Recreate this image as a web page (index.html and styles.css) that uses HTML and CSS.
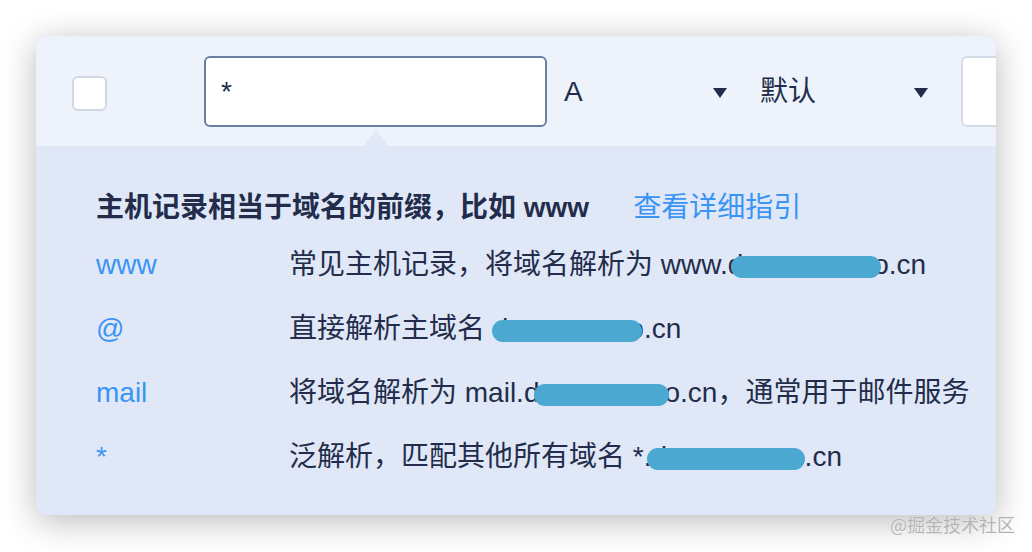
FILE: index.html
```html
<!DOCTYPE html>
<html lang="zh-CN">
<head>
<meta charset="utf-8">
<title>主机记录</title>
<link rel="stylesheet" href="styles.css">
</head>
<body>
<div class="page">
  <div class="card">
    <div class="toprow">
      <div class="checkbox"></div>
      <div class="field">
        <div class="input active">*</div>
        <div class="pointer"></div>
      </div>
      <div class="select sel-type">
        <span>A</span>
        <svg class="caret" width="14" height="10" viewBox="0 0 14 10"><polygon points="0,0 14,0 7,10" fill="#232d4b"/></svg>
      </div>
      <div class="select sel-line">
        <span>默认</span>
        <svg class="caret" width="14" height="10" viewBox="0 0 14 10"><polygon points="0,0 14,0 7,10" fill="#232d4b"/></svg>
      </div>
      <div class="input plain"></div>
    </div>
    <div class="panel">
      <div class="title"><b>主机记录相当于域名的前缀，比如 www</b><a class="link">查看详细指引</a></div>
      <div class="row"><span class="key">www</span><span class="desc">常见主机记录，将域名解析为 www.d<span class="blob b1"></span>o.cn</span></div>
      <div class="row"><span class="key">@</span><span class="desc">直接解析主域名 d<span class="blob b2"></span>o.cn</span></div>
      <div class="row"><span class="key">mail</span><span class="desc">将域名解析为 mail.d<span class="blob b3"></span>o.cn，通常用于邮件服务</span></div>
      <div class="row"><span class="key">*</span><span class="desc">泛解析，匹配其他所有域名 *.d<span class="blob b4"></span>o.cn</span></div>
    </div>
  </div>
  <div class="watermark">@掘金技术社区</div>
</div>
</body>
</html>
```

FILE: styles.css
```css
html, body {
  margin: 0;
  padding: 0;
  background: #ffffff;
}
body {
  font-family: "Liberation Sans", "Noto Sans CJK SC", sans-serif;
  color: #232d4b;
  width: 1032px;
  height: 552px;
  overflow: hidden;
}
.page {
  position: relative;
  padding: 36px 0 0 36px;
  height: 516px;
}
.card {
  width: 960px;
  height: 479px;
  border-radius: 10px;
  overflow: hidden;
  box-shadow: 0 6px 34px rgba(0, 0, 0, 0.28);
  display: flex;
  flex-direction: column;
  background: #e0e8f7;
}
.toprow {
  height: 110px;
  flex: none;
  background: #eef3fb;
  display: flex;
  align-items: flex-start;
  padding-top: 20px;
  box-sizing: border-box;
  white-space: nowrap;
}
.checkbox {
  width: 31px;
  height: 31px;
  margin: 20px 0 0 36px;
  border: 2px solid #d0d8e6;
  border-radius: 6px;
  background: #ffffff;
  flex: none;
}
.field {
  position: relative;
  margin-left: 97px;
  flex: none;
}
.input {
  height: 67px;
  border-radius: 6px;
  background: #ffffff;
  box-sizing: content-box;
  flex: none;
}
.input.active {
  width: 324px;
  border: 2px solid #6b7fa2;
  padding-left: 15px;
  font-size: 28px;
  line-height: 67px;
  color: #232d4b;
}
.input.plain {
  width: 200px;
  border: 2px solid #d3dbe8;
  margin-left: 33px;
}
.pointer {
  position: absolute;
  left: 160px;
  top: 74px;
  width: 0;
  height: 0;
  border-left: 12px solid transparent;
  border-right: 12px solid transparent;
  border-bottom: 16px solid #e0e8f7;
}
.select {
  height: 71px;
  display: flex;
  align-items: center;
  justify-content: space-between;
  font-size: 28px;
  flex: none;
}
.select span {
  line-height: 73px;
}
.sel-type {
  width: 163px;
  margin-left: 17px;
}
.sel-line {
  width: 168px;
  margin-left: 33px;
}
.caret {
  display: block;
  margin-top: 3px;
}
.panel {
  flex: 1;
  padding: 37px 0 0 60px;
  font-size: 28px;
  white-space: nowrap;
}
.title {
  height: 50px;
  line-height: 50px;
  display: flex;
}
.title b {
  font-weight: 700;
  color: #232d4b;
}
.link {
  margin-left: 44px;
  color: #3a94f6;
}
.row {
  height: 64px;
  line-height: 64px;
  display: flex;
}
.key {
  width: 193px;
  color: #3a94f6;
  flex: none;
}
.desc {
  color: #232d4b;
}
.blob {
  display: inline-block;
  height: 22px;
  border-radius: 11px;
  background: #4ba8d1;
  vertical-align: middle;
  position: relative;
  top: 0;
}
.b1 { width: 150px; margin: 0 -8px 0 -12px; }
.b2 { width: 150px; margin: 0 -14px 0 -16px; }
.b3 { width: 135px; margin: 0 -5px 0 -5px; }
.b4 { width: 158px; margin: 0 -16px 0 -20px; }
.watermark {
  position: absolute;
  left: 890px;
  top: 512px;
  font-size: 18px;
  line-height: 24px;
  color: #b3b3b3;
  text-shadow: 0 0 1px #ffffff;
  font-family: "Noto Sans CJK SC", sans-serif;
}
```
